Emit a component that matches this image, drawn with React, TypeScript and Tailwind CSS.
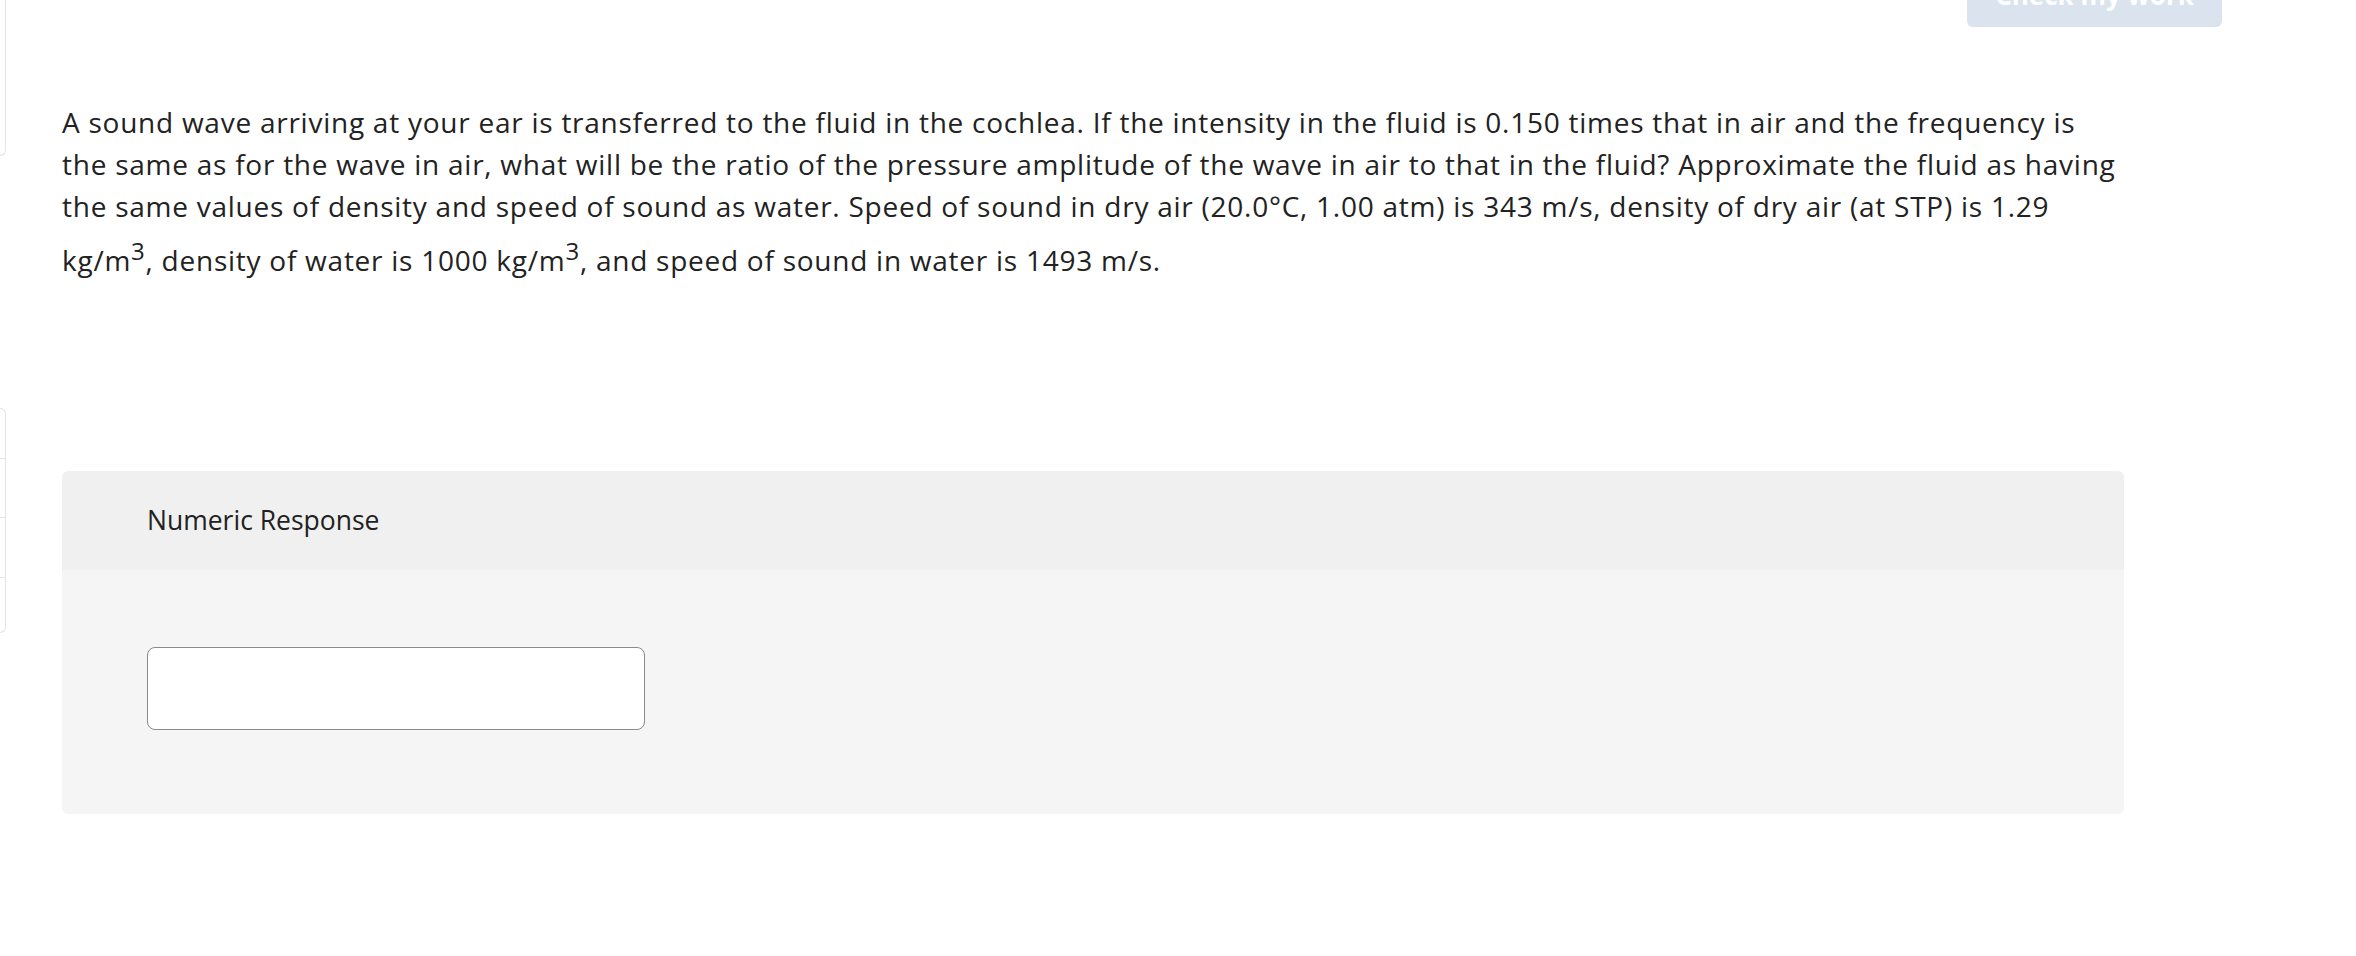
import React from "react";

export default function App() {
  return (
    <div className="flex w-[2356px] min-h-[956px] bg-white text-[#222222] font-['Open_Sans','Liberation_Sans',sans-serif]">
      <aside className="w-[6px] shrink-0 flex flex-col">
        <div className="h-[156px] border-r border-b border-[#e4e4e4] rounded-br-[6px]" />
        <div className="mt-[252px] flex flex-col border-y border-r border-[#e4e4e4] rounded-r-[6px]">
          <div className="h-[50px] border-b border-[#e4e4e4]" />
          <div className="h-[59px] border-b border-[#e4e4e4]" />
          <div className="h-[60px] border-b border-[#e4e4e4]" />
          <div className="h-[54px]" />
        </div>
      </aside>

      <main className="flex-1 flex flex-col pl-[56px]">
        <div className="flex h-[27px] items-end justify-end pr-[134px]">
          <button className="h-[64px] w-[255px] shrink-0 rounded-[6px] bg-[#dae3ee] text-white font-bold text-[26px] leading-[64px]">
            Check my work
          </button>
        </div>

        <p className="mt-[74px] w-[2062px] whitespace-nowrap text-[28px] leading-[42px] tracking-[0.75px]">
          A sound wave arriving at your ear is transferred to the fluid in the cochlea. If the intensity in the fluid is 0.150 times that in air and the frequency is
          <br />
          the same as for the wave in air, what will be the ratio of the pressure amplitude of the wave in air to that in the fluid? Approximate the fluid as having
          <br />
          the same values of density and speed of sound as water. Speed of sound in dry air (20.0°C, 1.00 atm) is 343 m/s, density of dry air (at STP) is 1.29
          <br />
          kg/m
          <span className="inline-block text-[24px] leading-[48px] align-[11px]">3</span>
          , density of water is 1000 kg/m
          <span className="inline-block text-[24px] leading-[48px] align-[11px]">3</span>
          , and speed of sound in water is 1493 m/s.
        </p>

        <section className="mt-[190px] w-[2062px] rounded-[6px] overflow-hidden">
          <div className="h-[99px] bg-[#f0f0f0] pl-[85px] flex items-center">
            <span className="text-[26.5px] leading-none">Numeric Response</span>
          </div>
          <div className="h-[244px] bg-[#f5f5f5] pl-[85px] pt-[77px]">
            <div className="h-[83px] w-[498px] rounded-[8px] border-[1.5px] border-[#8a8a8a] bg-white" />
          </div>
        </section>
      </main>
    </div>
  );
}
